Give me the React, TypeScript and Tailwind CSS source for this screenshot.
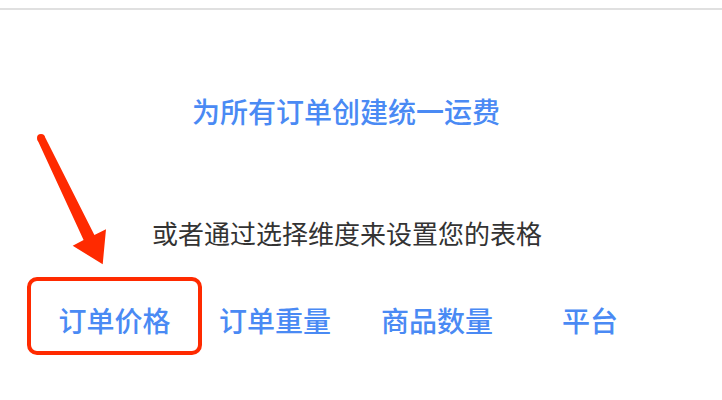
import React from "react";

const font = { fontFamily: '"Noto Sans CJK SC", "Noto Sans", sans-serif' };

export default function App() {
  return (
    <div className="relative w-[722px] h-[400px] bg-white overflow-hidden" style={font}>
      <div className="pt-[8px]">
        <div className="h-[2px] bg-[#e0e0e0]" />
      </div>
      <div className="mt-[87px] pr-[30px] text-center text-[28px] leading-[28px] font-medium text-[#4a8af4]">
        为所有订单创建统一运费
      </div>
      <div className="mt-[95px] pr-[28px] text-center text-[26px] leading-[26px] text-[#333333]">
        或者通过选择维度来设置您的表格
      </div>
      <div className="mt-[31px] flex items-center text-[28px] leading-[28px] font-medium text-[#4a8af4]">
        <div className="ml-[27px] w-[175px] h-[78px] border-4 border-[#ff2a00] rounded-[10px] flex items-center justify-center pt-[8px]">
          订单价格
        </div>
        <div className="ml-[17px] pt-[8px]">订单重量</div>
        <div className="ml-[50px] pt-[8px]">商品数量</div>
        <div className="ml-[69px] pt-[8px]">平台</div>
      </div>
      <svg
        className="absolute inset-0 pointer-events-none"
        width="722"
        height="400"
        viewBox="0 0 722 400"
      >
        <circle cx="41" cy="138" r="4" fill="#ff2a00" />
        <polygon
          fill="#ff2a00"
          points="37.4,139.8 83.6,240.1 72.7,245.7 102.7,264.3 106,229.3 94.4,234.9 44.6,136.2"
        />
      </svg>
    </div>
  );
}
